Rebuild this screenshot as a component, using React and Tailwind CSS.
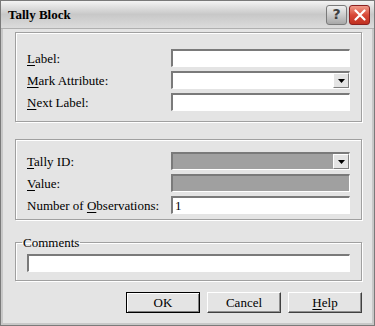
import React from "react";

const font = { fontFamily: '"Liberation Serif", "Times New Roman", serif' };

function U({ children }) {
  return <span className="underline underline-offset-2">{children}</span>;
}

function Field({ gray, value }) {
  return (
    <div
      className={`h-[18px] w-[179px] border-t-2 border-l-2 border-t-[#7a7a7a] border-l-[#7a7a7a] border-b border-r border-b-white border-r-white flex items-center px-[2px] text-[13px] leading-none ${
        gray ? "bg-[#a0a0a0]" : "bg-white"
      }`}
    >
      {value}
    </div>
  );
}

function Select({ gray }) {
  return (
    <div
      className={`h-[18px] w-[179px] border-t-2 border-l-2 border-t-[#7a7a7a] border-l-[#7a7a7a] border-b border-r border-b-white border-r-white flex justify-end ${
        gray ? "bg-[#a0a0a0]" : "bg-white"
      }`}
    >
      <div className="w-[16px] h-full bg-[#e4e4e4] border border-t-white border-l-white border-b-[#808080] border-r-[#808080] flex items-center justify-center">
        <svg width="7" height="4" viewBox="0 0 7 4">
          <path d="M0 0h7L3.5 4z" fill="#000" />
        </svg>
      </div>
    </div>
  );
}

function Row({ label, children }) {
  return (
    <div className="flex items-center justify-between h-[18px]">
      <span className="text-[13px] leading-none text-black">{label}</span>
      {children}
    </div>
  );
}

function Btn({ children, def }) {
  return (
    <button
      className={`w-[74px] h-[21px] bg-[#e4e4e4] text-[13px] leading-none text-black flex items-center justify-center ${
        def
          ? "border border-black shadow-[inset_1px_1px_0_#fff,inset_-1px_-1px_0_#808080]"
          : "border border-t-white border-l-white border-b-[#404040] border-r-[#404040] shadow-[inset_-1px_-1px_0_#909090]"
      }`}
      style={font}
    >
      {children}
    </button>
  );
}

const etched =
  "border border-[#a0a0a0] shadow-[inset_1px_1px_0_#fff,1px_1px_0_#fff]";

export default function App() {
  return (
    <div className="w-[375px] h-[326px] bg-[#e4e4e4] flex flex-col overflow-hidden border border-[#7a7a7a]" style={font}>
      {/* Title bar */}
      <div className="h-[28px] shrink-0 flex items-center justify-between pl-[7px] pr-[4px] bg-gradient-to-b from-[#f4f4f4] via-[#c8c8c8] to-[#dcdcdc] border-b border-[#b0b0b0]">
        <span className="text-[13px] font-bold text-black">Tally Block</span>
        <div className="flex gap-[2px]">
          <div className="w-[21px] h-[20px] rounded-[3px] border border-[#7a7a7a] bg-gradient-to-b from-[#f0f0f0] to-[#a8a8a8] flex items-center justify-center text-[14px] font-bold text-[#404040]" style={{ fontFamily: '"DejaVu Sans", sans-serif' }}>
            ?
          </div>
          <div className="w-[21px] h-[20px] rounded-[3px] border border-[#8a2020] bg-gradient-to-b from-[#f09a8a] via-[#d84838] to-[#c03020] flex items-center justify-center">
            <svg width="12" height="12" viewBox="0 0 12 12">
              <path d="M1.5 1.5l9 9M10.5 1.5l-9 9" stroke="#fff" strokeWidth="2.2" strokeLinecap="round" />
            </svg>
          </div>
        </div>
      </div>

      {/* Body */}
      <div className="flex-1 flex flex-col pl-[12px] pr-[10px] pt-[3px] border-x-[2px] border-b-[2px] border-[#c8c8c8]">
        <div className={`${etched} flex flex-col gap-[4px] pt-[16px] pb-[10px] px-[11px]`}>
          <Row label={<><U>L</U>abel:</>}>
            <Field />
          </Row>
          <Row label={<><U>M</U>ark Attribute:</>}>
            <Select />
          </Row>
          <Row label={<><U>N</U>ext Label:</>}>
            <Field />
          </Row>
        </div>

        <div className={`${etched} mt-[17px] flex flex-col gap-[4px] pt-[12px] pb-[5px] px-[11px]`}>
          <Row label={<><U>T</U>ally ID:</>}>
            <Select gray />
          </Row>
          <Row label={<><U>V</U>alue:</>}>
            <Field gray />
          </Row>
          <Row label={<>Number of <U>O</U>bservations:</>}>
            <Field value="1" />
          </Row>
        </div>

        <fieldset className={`${etched} mt-[16px] px-[11px] pb-[8px] pt-0`}>
          <legend className="text-[13px] leading-none px-[1px] ml-[-5px]">Comments</legend>
          <div className="mt-[5px] h-[18px] w-full bg-white border-t-2 border-l-2 border-t-[#7a7a7a] border-l-[#7a7a7a] border-b border-r border-b-white border-r-white" />
        </fieldset>

        <div className="mt-[11px] flex justify-end gap-[7px]">
          <Btn def>OK</Btn>
          <Btn>Cancel</Btn>
          <Btn><U>H</U>elp</Btn>
        </div>
      </div>
    </div>
  );
}
